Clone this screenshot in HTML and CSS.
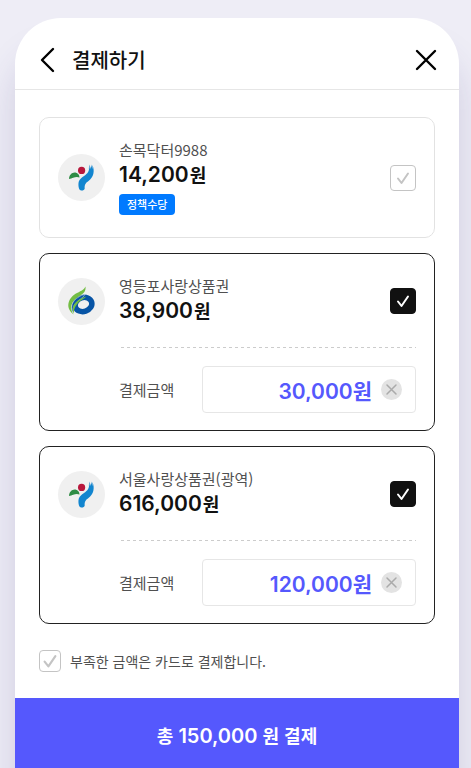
FILE: index.html
```html
<!DOCTYPE html>
<html lang="ko">

<head>
    <meta charset="UTF-8">
    <meta name="viewport" content="width=device-width, initial-scale=1">
    <title>결제하기</title>
    <link rel="stylesheet" href="styles.css">
</head>

<body>
    <svg width="0" height="0" class="defs" aria-hidden="true">
        <symbol id="seoul" viewBox="0 0 47 47">
            <path d="M11 25C11 21 14 18 17.500 18.500C20 19 21.500 21 21.500 23.500C18 22 15 24 11 25Z" fill="#2f8c45" />
            <circle cx="23.600" cy="16.400" r="3.600" fill="#b8173c" />
            <path d="M30 11C31.300 14 31.500 16.500 29.500 19C27 22 21 24 20.500 29C20.300 31 20.500 33 21 34.500C21.800 37.300 26 37.300 26.700 34.500C26.300 30.500 28 28.800 30.500 27C35.500 23 37 17.500 34.500 11L34.300 15L33.200 10.500L32.900 15L31.500 10.500L31.300 15Z" fill="#1285cf" />
        </symbol>
        <symbol id="ydp" viewBox="0 0 47 47">
            <ellipse cx="25.500" cy="26.500" rx="8.500" ry="7" transform="rotate(-18 25.500 26.500)" fill="none" stroke="#0754a5" stroke-width="5.500" />
            <path d="M15.500 36.500C6 29 11 19 19 15C24 12.500 26 11.500 27.500 8.500C28 13 26 15.500 21.500 18C14 22 11 29 15.500 36.500Z" fill="#73bd43" />
            <path d="M15.500 36C10.500 27 16 20 27 16C26 19 23 20.500 20 23C16 26 14 30 15.500 36Z" fill="#0754a5" stroke="#f0f0f0" stroke-width=".5" />
            <path d="M16 36C12.500 29 17 22 28 18.500C27 20.500 23 22 20.500 24.500C17.500 28 15.500 31 16 36Z" fill="#73bd43" />
        </symbol>
        <symbol id="tick" viewBox="0 0 26 26">
            <path d="M8 13.500L11.500 18L18 8.500" fill="none" stroke="currentColor" stroke-width="2" stroke-linecap="round" stroke-linejoin="round" />
        </symbol>
        <symbol id="cross" viewBox="0 0 21 21">
            <path d="M6 6L15 15M15 6L6 15" fill="none" stroke="currentColor" stroke-width="1.500" stroke-linecap="round" />
        </symbol>
    </svg>
    <form class="phone">
        <header class="header">
            <button type="button" class="icon-btn" aria-label="뒤로">
                <svg width="18" height="26" viewBox="0 0 18 26">
                    <path d="M14 2L3 13L14 24" fill="none" stroke="#000" stroke-width="2.400" stroke-linecap="round" stroke-linejoin="round" />
                </svg>
            </button>
            <h1 class="title">결제하기</h1>
            <button type="button" class="icon-btn" aria-label="닫기">
                <svg width="22" height="22" viewBox="0 0 22 22">
                    <path d="M2 2L20 20M20 2L2 20" fill="none" stroke="#000" stroke-width="2.400" stroke-linecap="round" />
                </svg>
            </button>
        </header>
        <main class="content">
            <section class="card">
                <div class="summary">
                    <svg class="logo"><use href="#seoul" /></svg>
                    <div class="info">
                        <label class="name" for="pay1">손목닥터9988</label>
                        <strong class="amount">14,200<span>원</span></strong>
                        <span class="badge">정책수당</span>
                    </div>
                    <span class="check">
                        <input type="checkbox" id="pay1">
                        <svg><use href="#tick" /></svg>
                    </span>
                </div>
            </section>
            <section class="card selected">
                <div class="summary">
                    <svg class="logo"><use href="#ydp" /></svg>
                    <div class="info">
                        <label class="name" for="pay2">영등포사랑상품권</label>
                        <strong class="amount">38,900<span>원</span></strong>
                    </div>
                    <span class="check">
                        <input type="checkbox" id="pay2" checked>
                        <svg><use href="#tick" /></svg>
                    </span>
                </div>
                <div class="field">
                    <label for="amount2">결제금액</label>
                    <div class="input-box">
                        <input type="text" id="amount2" value="30,000원">
                        <button type="button" class="clear" aria-label="지우기"><svg><use href="#cross" /></svg></button>
                    </div>
                </div>
            </section>
            <section class="card selected">
                <div class="summary">
                    <svg class="logo"><use href="#seoul" /></svg>
                    <div class="info">
                        <label class="name" for="pay3">서울사랑상품권(광역)</label>
                        <strong class="amount">616,000<span>원</span></strong>
                    </div>
                    <span class="check">
                        <input type="checkbox" id="pay3" checked>
                        <svg><use href="#tick" /></svg>
                    </span>
                </div>
                <div class="field">
                    <label for="amount3">결제금액</label>
                    <div class="input-box">
                        <input type="text" id="amount3" value="120,000원">
                        <button type="button" class="clear" aria-label="지우기"><svg><use href="#cross" /></svg></button>
                    </div>
                </div>
            </section>
            <div class="card-pay">
                <span class="check small">
                    <input type="checkbox" id="cardpay">
                    <svg><use href="#tick" /></svg>
                </span>
                <label for="cardpay">부족한 금액은 카드로 결제합니다.</label>
            </div>
        </main>
        <button type="submit" class="submit">총 <b>150,000</b> 원 결제</button>
    </form>
</body>

</html>
```

FILE: styles.css
```css
* {
    box-sizing: border-box;
}

body {
    margin: 0;
    padding: 18px 12px 0 15px;
    background: #eeedf6;
    font-family: "Noto Sans CJK KR", sans-serif;
    font-size: 15px;
    color: #505050;
}

button,
input {
    margin: 0;
    padding: 0;
    border: none;
    background: none;
    font-family: inherit;
}

button {
    cursor: pointer;
}

svg {
    display: block;
}

.defs {
    position: absolute;
}

.phone {
    display: flex;
    flex-direction: column;
    min-height: calc(100vh - 18px);
    border-radius: 46px 46px 0 0;
    background: #fff;
    box-shadow: 0 36px 36px #4038802e;
    overflow: hidden;
}

.header {
    display: flex;
    align-items: center;
    gap: 15px;
    height: 72px;
    padding: 12px 22px 0 24px;
    border-bottom: 1px solid #e6e6e6;
}

.title {
    flex: 1;
    margin: 0;
    font-size: 20px;
    font-weight: 500;
    line-height: 30px;
    color: #111;
}

.content {
    display: flex;
    flex-direction: column;
    gap: 15px;
    padding: 27px 24px 26px;
}

.card {
    padding: 22px 18px;
    border: 1px solid #e2e2e2;
    border-radius: 10px;
}

.card.selected {
    padding-bottom: 17px;
    border-color: #222;
}

.summary {
    display: flex;
    align-items: center;
    gap: 14px;
}

.logo {
    width: 47px;
    height: 47px;
    border-radius: 50%;
    background: #f0f0f0;
}

.info {
    display: flex;
    flex: 1;
    flex-direction: column;
    align-items: flex-start;
}

.name {
    line-height: 20px;
}

.amount {
    font-family: Inter, "Noto Sans CJK KR", sans-serif;
    font-size: 21px;
    font-weight: 600;
    line-height: 30px;
    color: #111;
}

.amount span {
    margin-left: 1px;
    font-size: 18px;
    line-height: 1;
}

.badge {
    margin-top: 4px;
    padding: 0 8px;
    border-radius: 4px;
    background: #007aff;
    color: #fff;
    font-size: 11px;
    font-weight: 500;
    line-height: 21px;
}

.check {
    display: grid;
    width: 26px;
    height: 26px;
    color: #c4c4c4;
}

.check > * {
    grid-area: 1 / 1;
    width: 100%;
    height: 100%;
}

.check input {
    appearance: none;
    border: 1px solid #c4c4c4;
    border-radius: 4px;
    cursor: pointer;
}

.check input:checked {
    border-color: #111;
    background: #111;
}

.check input:checked + svg {
    color: #fff;
}

.check svg {
    pointer-events: none;
}

.check.small {
    width: 22px;
    height: 22px;
}

.check.small svg {
    width: 28px;
    height: 28px;
    margin: -3px;
}

.field {
    display: flex;
    align-items: center;
    margin: 21px 0 0 61px;
    padding-top: 19px;
    background: repeating-linear-gradient(90deg, transparent 0 2px, #ccc 2px 5px, transparent 5px 6px) top / 100% 1px no-repeat;
}

.field label {
    width: 28%;
}

.input-box {
    display: flex;
    flex: 1;
    align-items: center;
    gap: 9px;
    height: 47px;
    padding-right: 13px;
    border: 1px solid #e6e6e6;
    border-radius: 4px;
}

.input-box input {
    flex: 1;
    width: 0;
    outline: none;
    font-family: Inter, "Noto Sans CJK KR", sans-serif;
    font-size: 21px;
    font-weight: 600;
    text-align: right;
    color: #5558fd;
}

.clear {
    width: 21px;
    height: 21px;
    border-radius: 50%;
    background: #e3e3e3;
    color: #aaa;
}

.clear svg {
    width: 21px;
    height: 21px;
}

.card-pay {
    display: flex;
    align-items: center;
    gap: 9px;
    margin-top: 11px;
}

.card-pay label {
    font-size: 14px;
    line-height: 22px;
}

.submit {
    flex: 1;
    min-height: 69px;
    padding-top: 4px;
    background: #5558fd;
    color: #fff;
    font-size: 18px;
    font-weight: 700;
}

.submit b {
    font-family: Inter, sans-serif;
    font-size: 20px;
    font-weight: 600;
}
```
